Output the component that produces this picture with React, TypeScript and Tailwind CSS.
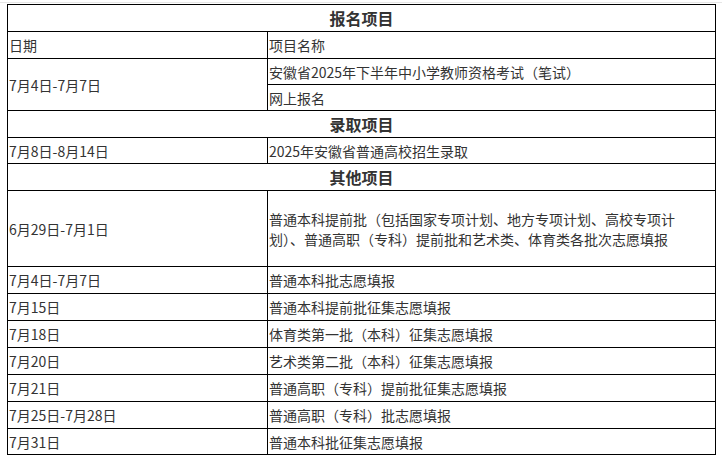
const FONT = "font-['Microsoft_YaHei','Noto_Sans_CJK_SC',sans-serif]"

type Row = { date: string; name: string }

const others: Row[] = [
  { date: "7月4日-7月7日", name: "普通本科批志愿填报" },
  { date: "7月15日", name: "普通本科提前批征集志愿填报" },
  { date: "7月18日", name: "体育类第一批（本科）征集志愿填报" },
  { date: "7月20日", name: "艺术类第二批（本科）征集志愿填报" },
  { date: "7月21日", name: "普通高职（专科）提前批征集志愿填报" },
  { date: "7月25日-7月28日", name: "普通高职（专科）批志愿填报" },
  { date: "7月31日", name: "普通本科批征集志愿填报" },
]

function SectionHead({ title }: { title: string }) {
  return (
    <tr className="h-[27px]">
      <td colSpan={2} className="border border-black p-0 text-center text-base font-bold">
        {title}
      </td>
    </tr>
  )
}

function Cell({ children, rowSpan }: { children: React.ReactNode; rowSpan?: number }) {
  return (
    <td rowSpan={rowSpan} className="border border-black py-0 pl-[1px] pr-0 align-middle">
      {children}
    </td>
  )
}

export default function App() {
  return (
    <div className={`${FONT} min-h-[465px] bg-white text-[14px] leading-[20px] text-[#333]`}>
      <div className="mt-[2px] border-t border-[#e6e6e6] pt-[1px]">
        <table className="ml-[7px] w-[709px] table-fixed border-collapse">
          <colgroup>
            <col className="w-[260px]" />
            <col />
          </colgroup>
          <tbody>
            <SectionHead title="报名项目" />
            <tr className="h-[27px]">
              <Cell>日期</Cell>
              <Cell>项目名称</Cell>
            </tr>
            <tr className="h-[26px]">
              <Cell rowSpan={2}>7月4日-7月7日</Cell>
              <Cell>安徽省2025年下半年中小学教师资格考试（笔试）</Cell>
            </tr>
            <tr className="h-[26px]">
              <Cell>网上报名</Cell>
            </tr>
            <SectionHead title="录取项目" />
            <tr className="h-[26px]">
              <Cell>7月8日-8月14日</Cell>
              <Cell>2025年安徽省普通高校招生录取</Cell>
            </tr>
            <SectionHead title="其他项目" />
            <tr className="h-[76px]">
              <Cell>6月29日-7月1日</Cell>
              <Cell>
                普通本科提前批（包括国家专项计划、地方专项计划、高校专项计
                <br />
                划）、普通高职（专科）提前批和艺术类、体育类各批次志愿填报
              </Cell>
            </tr>
            {others.map((r, i) => (
              <tr key={r.date} className={i === others.length - 1 ? "h-[26px]" : "h-[27px]"}>
                <Cell>{r.date}</Cell>
                <Cell>{r.name}</Cell>
              </tr>
            ))}
          </tbody>
        </table>
      </div>
    </div>
  )
}
